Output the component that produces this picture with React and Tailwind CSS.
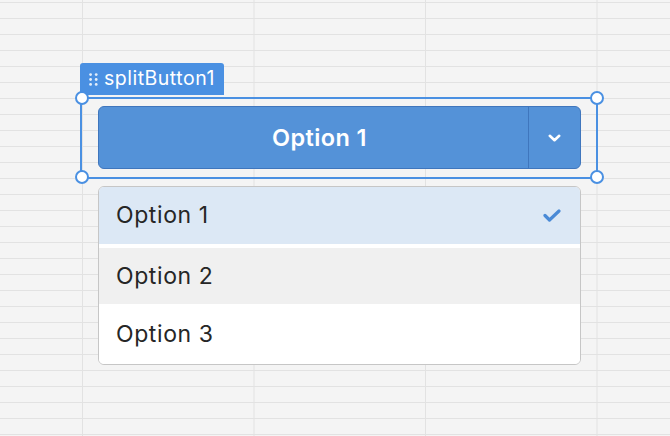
import React from 'react';

const font = { fontFamily: 'Inter, "Noto Sans", sans-serif' };

function Handle({ className }) {
  return <div className={`absolute w-[14px] h-[14px] rounded-full border-2 border-[#4a90e2] bg-white ${className}`} />;
}

function DragDots() {
  return (
    <svg width="9" height="13" viewBox="0 0 9 13" fill="#ffffff" opacity="0.85">
      <circle cx="1.6" cy="1.6" r="1.4" />
      <circle cx="7.2" cy="1.6" r="1.4" />
      <circle cx="1.6" cy="6.5" r="1.4" />
      <circle cx="7.2" cy="6.5" r="1.4" />
      <circle cx="1.6" cy="11.4" r="1.4" />
      <circle cx="7.2" cy="11.4" r="1.4" />
    </svg>
  );
}

export default function App() {
  const options = ['Option 1', 'Option 2', 'Option 3'];
  const selected = 0;
  const hovered = 1;

  return (
    <div
      className="w-[670px] h-[436px] overflow-hidden bg-[#f4f4f4] bg-[linear-gradient(#e2e2e2_1px,transparent_1px),linear-gradient(90deg,#e2e2e2_1px,transparent_1px)] [background-size:171.5px_16px] [background-position:82px_2px]"
      style={font}
    >
      <div className="pl-[80px] pt-[63px]">
        {/* component label */}
        <div className="inline-flex items-center gap-[6px] h-[32px] pl-[9px] pr-[9px] rounded-t-[3px] bg-[#4a90e2] text-white text-[19.5px] tracking-[0.5px] leading-none">
          <DragDots />
          <span>splitButton1</span>
        </div>

        {/* selection frame */}
        <div className="relative mt-[2px] w-[518px] h-[82px] border-2 border-[#4a90e2] pl-[16px] pt-[7px]">
          <Handle className="-left-[7.5px] -top-[8px]" />
          <Handle className="-right-[7.5px] -top-[8px]" />
          <Handle className="-left-[7.5px] -bottom-[7px]" />
          <Handle className="-right-[7.5px] -bottom-[7px]" />

          <div className="flex w-[483px] h-[63px] rounded-[6px] border border-[#3f76bd] bg-[#5492d8] text-white">
            <div className="flex-1 flex items-center justify-center pl-[12px] text-[23.5px] tracking-[0.4px] font-semibold">
              Option 1
            </div>
            <div className="w-px bg-[#3f76bd]" />
            <div className="w-[51px] flex items-center justify-center">
              <svg width="13" height="8" viewBox="0 0 13 8" fill="none" stroke="#ffffff" strokeWidth="2.6" strokeLinecap="round" strokeLinejoin="round">
                <path d="M1.8 1.8l4.7 4.4 4.7-4.4" />
              </svg>
            </div>
          </div>
        </div>

        {/* dropdown menu */}
        <div className="ml-[18px] mt-[7px] w-[483px] rounded-[6px] border border-[#c6c6c6] bg-white overflow-hidden text-[23px] tracking-[0.6px] text-[#262626]">
          {options.map((o, i) => (
            <div
              key={o}
              className={`flex items-center justify-between pl-[17px] pr-[19px] ${
                i === 0 ? 'h-[57px] mb-[4px]' : i === 1 ? 'h-[56px]' : 'h-[60px]'
              } ${i === selected ? 'bg-[#dce8f5]' : i === hovered ? 'bg-[#f0f0f0]' : 'bg-white'}`}
            >
              <span>{o}</span>
              {i === selected && (
                <svg width="18" height="13" viewBox="0 0 18 13" fill="none" stroke="#4a8ad6" strokeWidth="3.2" strokeLinecap="round" strokeLinejoin="round">
                  <path d="M2 6.5l4.5 4.5L16 2" />
                </svg>
              )}
            </div>
          ))}
        </div>
      </div>
    </div>
  );
}
